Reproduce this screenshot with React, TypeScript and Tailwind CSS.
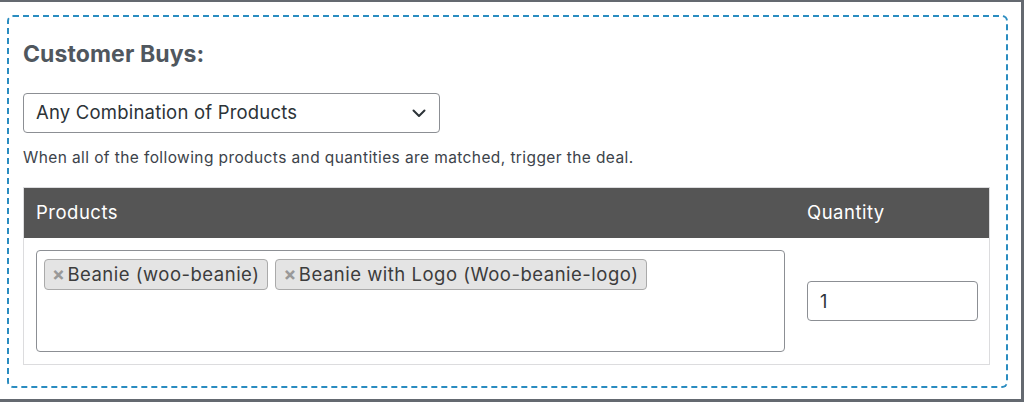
import React from "react";

const tags = ["Beanie (woo-beanie)", "Beanie with Logo (Woo-beanie-logo)"];

const Chevron = () => (
  <svg width="14" height="9" viewBox="0 0 14 9" fill="none">
    <path d="M1.5 1.5 L7 7 L12.5 1.5" stroke="#2c3338" strokeWidth="2" strokeLinecap="round" strokeLinejoin="round" />
  </svg>
);

export default function App() {
  return (
    <div
      className="w-[1024px] h-[402px] bg-white border-t-2 border-r-[3px] border-b-[3px] border-[#646970] pl-[7px] pr-[13px] pt-[13px] overflow-hidden"
      style={{ fontFamily: "Inter, 'Liberation Sans', sans-serif" }}
    >
      <div className="h-[373px] border-2 border-dashed border-[#2a8cc0] rounded-[6px] pl-[14px] pr-[16px] pt-[23px]">
        <h2 className="text-[23px] leading-[28px] font-bold text-[#50575e] tracking-[0.1px]">Customer Buys:</h2>

        {/* deal type select */}
        <div className="mt-[25px] w-[417px] h-[40px] border border-[#8c8f94] rounded-[4px] flex items-center justify-between pl-[12px] pr-[13px]">
          <span className="text-[18.5px] tracking-[0.2px] text-[#2c3338]">Any Combination of Products</span>
          <Chevron />
        </div>

        <p className="mt-[15px] text-[15.5px] leading-[20px] tracking-[0.4px] text-[#3c434a]">
          When all of the following products and quantities are matched, trigger the deal.
        </p>

        {/* products table */}
        <div className="mt-[19px] w-[967px] border border-[#dcdcde]">
          <div className="flex bg-[#555555] h-[50px] items-center text-white text-[18.5px] tracking-[0.5px]">
            <div className="flex-1 pl-[12px]">Products</div>
            <div className="w-[194px] pl-[12px]">Quantity</div>
          </div>
          <div className="flex items-center">
            <div className="flex-1 py-[12px] pl-[12px] pr-[10px]">
              <div className="h-[102px] border border-[#8c8f94] rounded-[4px] pt-[8px] pl-[7px] flex items-start gap-[7px]">
                {tags.map((t) => (
                  <span
                    key={t}
                    className="flex items-center h-[31px] pl-[7px] pr-[8px] bg-[#e4e4e4] border border-[#aaaaaa] rounded-[4px] text-[18.5px] tracking-[0.5px] text-[#3c3c3c]"
                  >
                    <span className="text-[#999999] text-[19px] font-bold mr-[2px] leading-none">×</span>
                    {t}
                  </span>
                ))}
              </div>
            </div>
            <div className="w-[194px] px-[12px]">
              <div className="h-[40px] w-[171px] border border-[#8c8f94] rounded-[4px] flex items-center pl-[12px] text-[18px] text-[#2c3338]">
                1
              </div>
            </div>
          </div>
        </div>
      </div>
    </div>
  );
}
